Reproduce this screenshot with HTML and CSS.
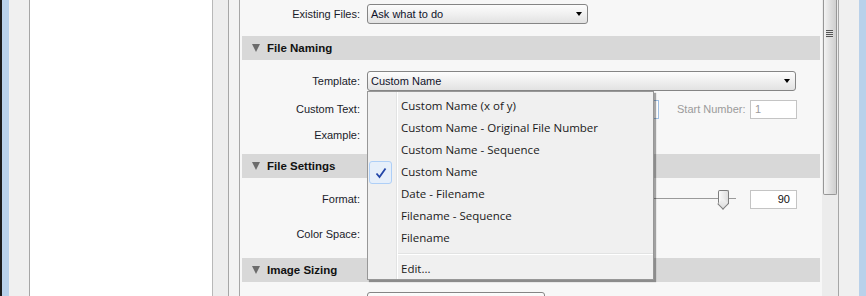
FILE: index.html
```html
<!DOCTYPE html>
<html lang="en">
<head>
    <meta charset="UTF-8">
    <title>Export - File Naming</title>
    <link rel="stylesheet" href="styles.css">
</head>
<body>
    <div class="win-edge"></div>
    <div class="side-gray"></div>
    <div class="folder-panel"></div>
    <div class="splitter"></div>
    <div class="gutter"></div>

    <div class="content">
        <div class="row row-top">
            <span class="label">Existing Files:</span>
            <div class="select sel-existing"><span>Ask what to do</span><i class="arrow"></i></div>
        </div>

        <div class="section-head"><i class="twisty"></i>File Naming</div>
        <div class="section-body naming">
            <div class="row row-28">
                <span class="label">Template:</span>
                <div class="dropdown">
                    <div class="select sel-template"><span>Custom Name</span><i class="arrow"></i></div>
                    <ul class="menu">
                        <li>Custom Name (x of y)</li>
                        <li>Custom Name - Original File Number</li>
                        <li>Custom Name - Sequence</li>
                        <li class="checked">
                            <span class="check"><svg width="12" height="12" viewBox="0 0 12 12"><path d="M1.5 6.5 L4.5 10 L10.5 1.5" fill="none" stroke="#2346a8" stroke-width="1.8"/></svg></span>
                            Custom Name
                        </li>
                        <li>Date - Filename</li>
                        <li>Filename - Sequence</li>
                        <li>Filename</li>
                        <li class="sep"></li>
                        <li>Edit...</li>
                    </ul>
                </div>
            </div>
            <div class="row row-28">
                <span class="label">Custom Text:</span>
                <div class="field field-custom"></div>
                <span class="label-off">Start Number:</span>
                <div class="field field-small field-off">1</div>
            </div>
            <div class="row row-24">
                <span class="label">Example:</span>
            </div>
        </div>

        <div class="section-head"><i class="twisty"></i>File Settings</div>
        <div class="section-body settings">
            <div class="row row-34">
                <span class="label">Format:</span>
                <div class="slider">
                    <div class="track"></div>
                    <div class="thumb"></div>
                </div>
                <div class="field field-small field-num">90</div>
            </div>
            <div class="row row-36">
                <span class="label">Color Space:</span>
            </div>
        </div>

        <div class="section-head"><i class="twisty"></i>Image Sizing</div>
        <div class="section-body sizing">
            <div class="row">
                <span class="label"></span>
                <div class="select sel-size"></div>
            </div>
        </div>
    </div>

    <div class="scrollbar">
        <div class="scroll-thumb"><span class="grip"></span></div>
    </div>
    <div class="side-gray side-right"></div>
    <div class="win-edge-right"></div>
</body>
</html>
```

FILE: styles.css
```css
body {
    margin: 0;
    height: 296px;
    overflow: hidden;
    display: flex;
    font-family: "Liberation Sans", Arial, sans-serif;
    font-size: 11px;
    color: #1a1b2a;
    background: #f0f0f0;
}

/* window frame and side columns */
.win-edge {
    width: 7px;
    border-left: 2px solid #1c1c1c;
    background: #b9d1ea;
}

.win-edge-right {
    width: 7px;
    background: #b9d1ea;
}

.side-gray {
    width: 20px;
    background: #f0f0f0;
    border-right: 1px solid #a6a6a6;
}

.side-right {
    border-right: none;
    border-left: 1px solid #a6a6a6;
}

.folder-panel {
    width: 182px;
    background: #fff;
    border-right: 1px solid #b8b8b8;
}

.splitter {
    width: 15px;
    background: #ededed;
    border-right: 1px solid #a6a6a6;
}

.gutter {
    width: 10px;
    background: #f3f3f3;
    border-right: 1px solid #a6a6a6;
}

/* main settings panel */
.content {
    width: 578px;
    height: 296px;
    overflow: hidden;
    padding: 0 2px;
    background: #f7f7f7;
}

.row {
    display: flex;
    align-items: center;
}

.row-top { height: 27px; margin-bottom: 9px; }
.row-28 { height: 28px; }
.row-24 { height: 24px; }
.row-34 { height: 34px; }
.row-36 { height: 36px; }

.label {
    width: 118px;
    margin-right: 7px;
    text-align: right;
    flex: none;
}

.section-head {
    height: 24px;
    display: flex;
    align-items: center;
    padding-left: 10px;
    background: #d8d8d8;
    font-weight: bold;
    font-size: 11.5px;
    color: #111;
}

.twisty {
    width: 0;
    height: 0;
    border-left: 4px solid transparent;
    border-right: 4px solid transparent;
    border-top: 8px solid #6b6b6b;
    margin-right: 7px;
}

.naming { padding: 7px 0; }
.settings { padding: 4px 0 6px; }
.sizing { padding-top: 10px; }

/* controls */
.select {
    box-sizing: border-box;
    height: 20px;
    border: 1px solid #858585;
    border-radius: 3px;
    background: linear-gradient(#fdfdfd, #f0f0f0 50%, #e2e2e2);
    display: flex;
    align-items: center;
    justify-content: space-between;
    padding: 0 5px 0 3px;
    color: #10122a;
}

.arrow {
    width: 0;
    height: 0;
    border-left: 3.5px solid transparent;
    border-right: 3.5px solid transparent;
    border-top: 4px solid #000;
}

.sel-existing { width: 221px; }
.sel-template { width: 429px; }
.sel-size { width: 178px; }

.field {
    box-sizing: border-box;
    height: 19px;
    background: #fff;
    border: 1px solid #c4c4c4;
    padding: 0 4px;
    display: flex;
    align-items: center;
}

.field-custom {
    width: 292px;
    border-color: #9fbfe3;
}

.label-off {
    color: #9b9b9b;
    margin-left: 18px;
    width: 73px;
}

.field-small { width: 47px; }
.field-off { color: #9b9b9b; }

.field-num {
    justify-content: flex-end;
    padding-right: 6px;
    margin-left: 14px;
    color: #111;
}

.slider {
    position: relative;
    width: 369px;
    height: 20px;
}

.track {
    position: absolute;
    left: 0;
    right: 0;
    top: 9px;
    height: 1px;
    background: #9a9a9a;
}

.thumb {
    position: absolute;
    left: 351px;
    top: 1px;
    width: 9px;
    height: 13px;
    border: 1px solid #7d7d7d;
    border-bottom: none;
    border-radius: 2px 2px 0 0;
    background: linear-gradient(90deg, #fafafa, #dedede);
}

.thumb::after {
    content: "";
    position: absolute;
    left: -1px;
    top: 12px;
    width: 7px;
    height: 7px;
    border-right: 1px solid #7d7d7d;
    border-bottom: 1px solid #7d7d7d;
    background: linear-gradient(135deg, #f4f4f4, #dcdcdc);
    transform: translate(1px, -3px) rotate(45deg);
    transform-origin: center;
}

/* popup menu */
.dropdown {
    position: relative;
}

.menu {
    position: absolute;
    top: 20px;
    left: 0;
    z-index: 5;
    box-sizing: border-box;
    width: 287px;
    height: 189px;
    margin: 0;
    padding: 3px 0 2px;
    list-style: none;
    background: #f0f0f0 linear-gradient(90deg, transparent 28px, #e2e3e3 28px, #e2e3e3 29px, #fff 29px, #fff 30px, transparent 30px);
    border: 1px solid #979797;
    box-shadow: 2px 2px 1px rgba(0, 0, 0, 0.35);
    font-family: "Open Sans", "Noto Sans", sans-serif;
    font-size: 11.5px;
    color: #1a1a1a;
}

.menu li {
    position: relative;
    height: 22px;
    line-height: 22px;
    padding-left: 33px;
}

.menu li.sep {
    height: 0;
    margin: 4px 0 3px 30px;
    padding: 0;
    border-top: 1px solid #e2e3e3;
    border-bottom: 1px solid #fff;
}

.check {
    position: absolute;
    left: 1px;
    top: 0;
    box-sizing: border-box;
    width: 23px;
    height: 23px;
    border: 1px solid #aecff7;
    border-radius: 3px;
    background: #e6effa;
    display: flex;
    align-items: center;
    justify-content: center;
}

/* scrollbar */
.scrollbar {
    width: 16px;
    background: #ececec;
}

.scroll-thumb {
    box-sizing: border-box;
    margin-left: 1px;
    width: 14px;
    height: 195px;
    border: 1px solid #979797;
    border-top: none;
    border-radius: 0 0 2px 2px;
    background: linear-gradient(90deg, #f3f3f3, #dcdcdc 60%, #cfcfcf);
    padding-top: 30px;
}

.grip {
    display: block;
    width: 7px;
    height: 8px;
    margin-left: 2px;
    background: repeating-linear-gradient(#555 0, #555 1px, #e0e0e0 1px, #e0e0e0 2px);
}
```
